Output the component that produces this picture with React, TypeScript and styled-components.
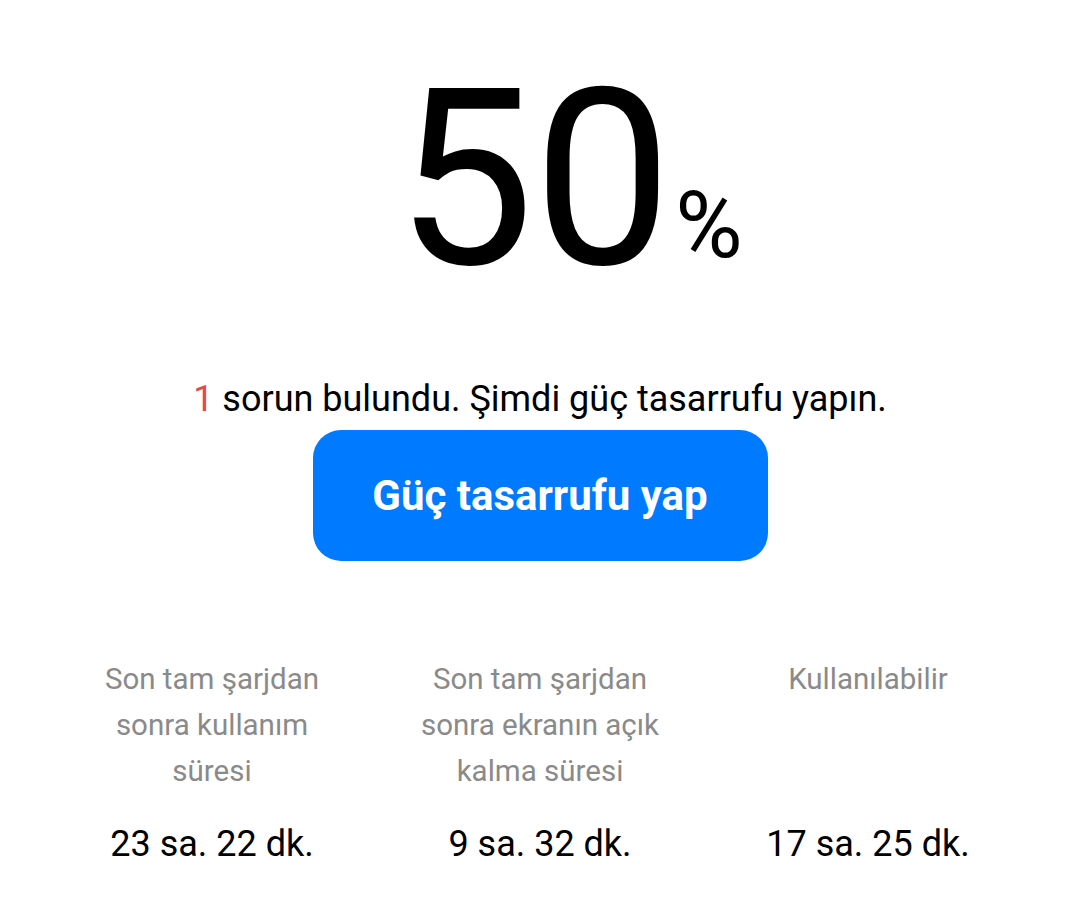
import React from "react";
import styled, { createGlobalStyle } from "styled-components";

const GlobalStyle = createGlobalStyle`
    body {
        margin: 0;
        background: #ffffff;
        font-family: Roboto, "Noto Sans", sans-serif;
    }
`

const Page = styled.div`
    width: 1080px;
    height: 908px;
    display: flex;
    flex-direction: column;
    align-items: center;
    overflow: hidden;
`

const Level = styled.div`
    margin-top: 56px;
    line-height: 1;
    white-space: nowrap;
    color: #000;
`

const Number = styled.span`
    font-size: 247px;
    font-weight: 400;
    letter-spacing: -1px;
`

const Percent = styled.span`
    font-size: 92px;
    font-weight: 400;
    margin-left: 4px;
    margin-right: -58px;
    vertical-align: 7px;
`

const Message = styled.div`
    margin-top: 75px;
    font-size: 36px;
    color: #000;
`

const Count = styled.span`
    color: #e5484d;
`

const Button = styled.button`
    margin-top: 10px;
    width: 455px;
    height: 131px;
    border: none;
    border-radius: 28px;
    background: #007aff;
    color: #fff;
    font-family: Roboto, sans-serif;
    font-size: 42px;
    font-weight: 700;
    cursor: pointer;
`

const Stats = styled.div`
    margin-top: 95px;
    width: 984px;
    display: grid;
    grid-template-columns: repeat(3, 1fr);
`

const Stat = styled.div`
    display: flex;
    flex-direction: column;
    align-items: center;
    text-align: center;
`

const Label = styled.div`
    width: 260px;
    height: 138px;
    font-size: 29.5px;
    line-height: 46px;
    color: #8a8a8a;
`

const Value = styled.div`
    margin-top: 29px;
    font-size: 36px;
    color: #000;
`

const stats = [
    { label: "Son tam şarjdan sonra kullanım süresi", value: "23 sa. 22 dk." },
    { label: "Son tam şarjdan sonra ekranın açık kalma süresi", value: "9 sa. 32 dk." },
    { label: "Kullanılabilir", value: "17 sa. 25 dk." },
]

const App = () => {
    return (
        <Page>
            <GlobalStyle />
            <Level>
                <Number>50</Number>
                <Percent>%</Percent>
            </Level>
            <Message>
                <Count>1</Count> sorun bulundu. Şimdi güç tasarrufu yapın.
            </Message>
            <Button>Güç tasarrufu yap</Button>
            <Stats>
                {stats.map((s) => (
                    <Stat key={s.value}>
                        <Label>{s.label}</Label>
                        <Value>{s.value}</Value>
                    </Stat>
                ))}
            </Stats>
        </Page>
    )
}

export default App;
